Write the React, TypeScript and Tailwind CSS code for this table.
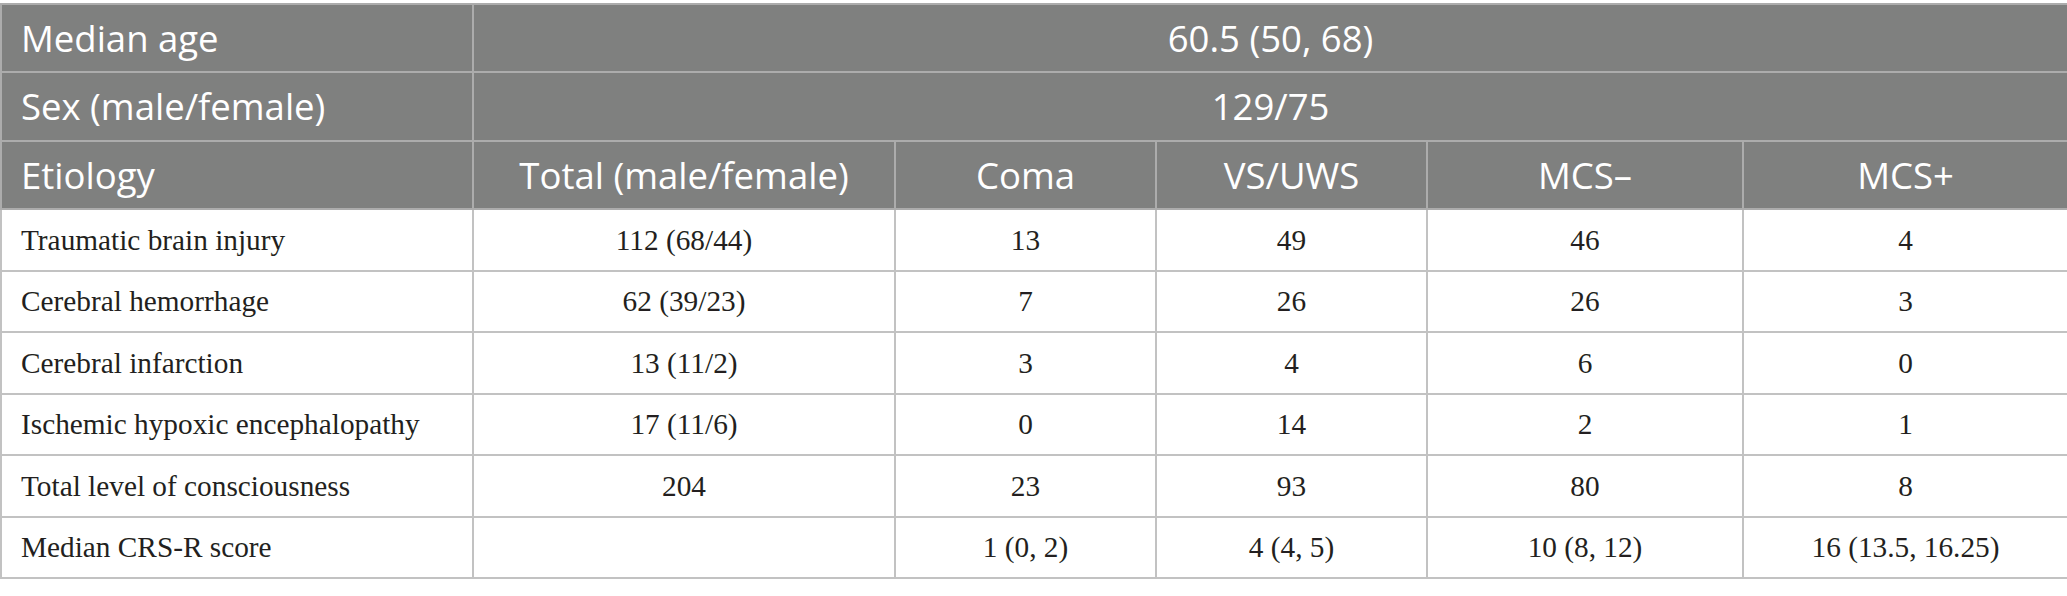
const rows = [
  { label: 'Traumatic brain injury', total: '112 (68/44)', coma: '13', vs: '49', minus: '46', plus: '4' },
  { label: 'Cerebral hemorrhage', total: '62 (39/23)', coma: '7', vs: '26', minus: '26', plus: '3' },
  { label: 'Cerebral infarction', total: '13 (11/2)', coma: '3', vs: '4', minus: '6', plus: '0' },
  { label: 'Ischemic hypoxic encephalopathy', total: '17 (11/6)', coma: '0', vs: '14', minus: '2', plus: '1' },
  { label: 'Total level of consciousness', total: '204', coma: '23', vs: '93', minus: '80', plus: '8' },
  { label: 'Median CRS-R score', total: '', coma: '1 (0, 2)', vs: '4 (4, 5)', minus: '10 (8, 12)', plus: '16 (13.5, 16.25)' },
];

const head = "border-2 border-[#acacac] text-white text-[36.5px] font-['Open_Sans',sans-serif] font-normal";
const cell = "border-2 border-[#c2c2c2] text-center text-[29.3px] text-[#231f20] font-['Liberation_Serif',serif] pt-[2px]";

export default function App() {
  return (
    <div className="min-h-[596px] w-[2067px] bg-white pt-[3px]">
      <table className="w-[2067px] table-fixed border-collapse">
        <colgroup>
          <col className="w-[472px]" />
          <col className="w-[422px]" />
          <col className="w-[261px]" />
          <col className="w-[271px]" />
          <col className="w-[316px]" />
          <col className="w-[325px]" />
        </colgroup>
        <thead className="bg-[#7f807f]">
          <tr className="h-[68px]">
            <th className={`${head} pl-[19px] text-left`}>Median age</th>
            <th colSpan={5} className={`${head} text-center`}>60.5 (50, 68)</th>
          </tr>
          <tr className="h-[69px]">
            <th className={`${head} pl-[19px] text-left`}>Sex (male/female)</th>
            <th colSpan={5} className={`${head} text-center`}>129/75</th>
          </tr>
          <tr className="h-[68px]">
            <th className={`${head} pl-[19px] text-left`}>Etiology</th>
            <th className={`${head} text-center`}>Total (male/female)</th>
            <th className={`${head} text-center`}>Coma</th>
            <th className={`${head} text-center`}>VS/UWS</th>
            <th className={`${head} text-center`}>MCS–</th>
            <th className={`${head} text-center`}>MCS+</th>
          </tr>
        </thead>
        <tbody>
          {rows.map((r) => (
            <tr key={r.label} className="h-[61.5px]">
              <td className={`${cell} pl-[19px] text-left`}>{r.label}</td>
              <td className={cell}>{r.total}</td>
              <td className={cell}>{r.coma}</td>
              <td className={cell}>{r.vs}</td>
              <td className={cell}>{r.minus}</td>
              <td className={cell}>{r.plus}</td>
            </tr>
          ))}
        </tbody>
      </table>
    </div>
  );
}
